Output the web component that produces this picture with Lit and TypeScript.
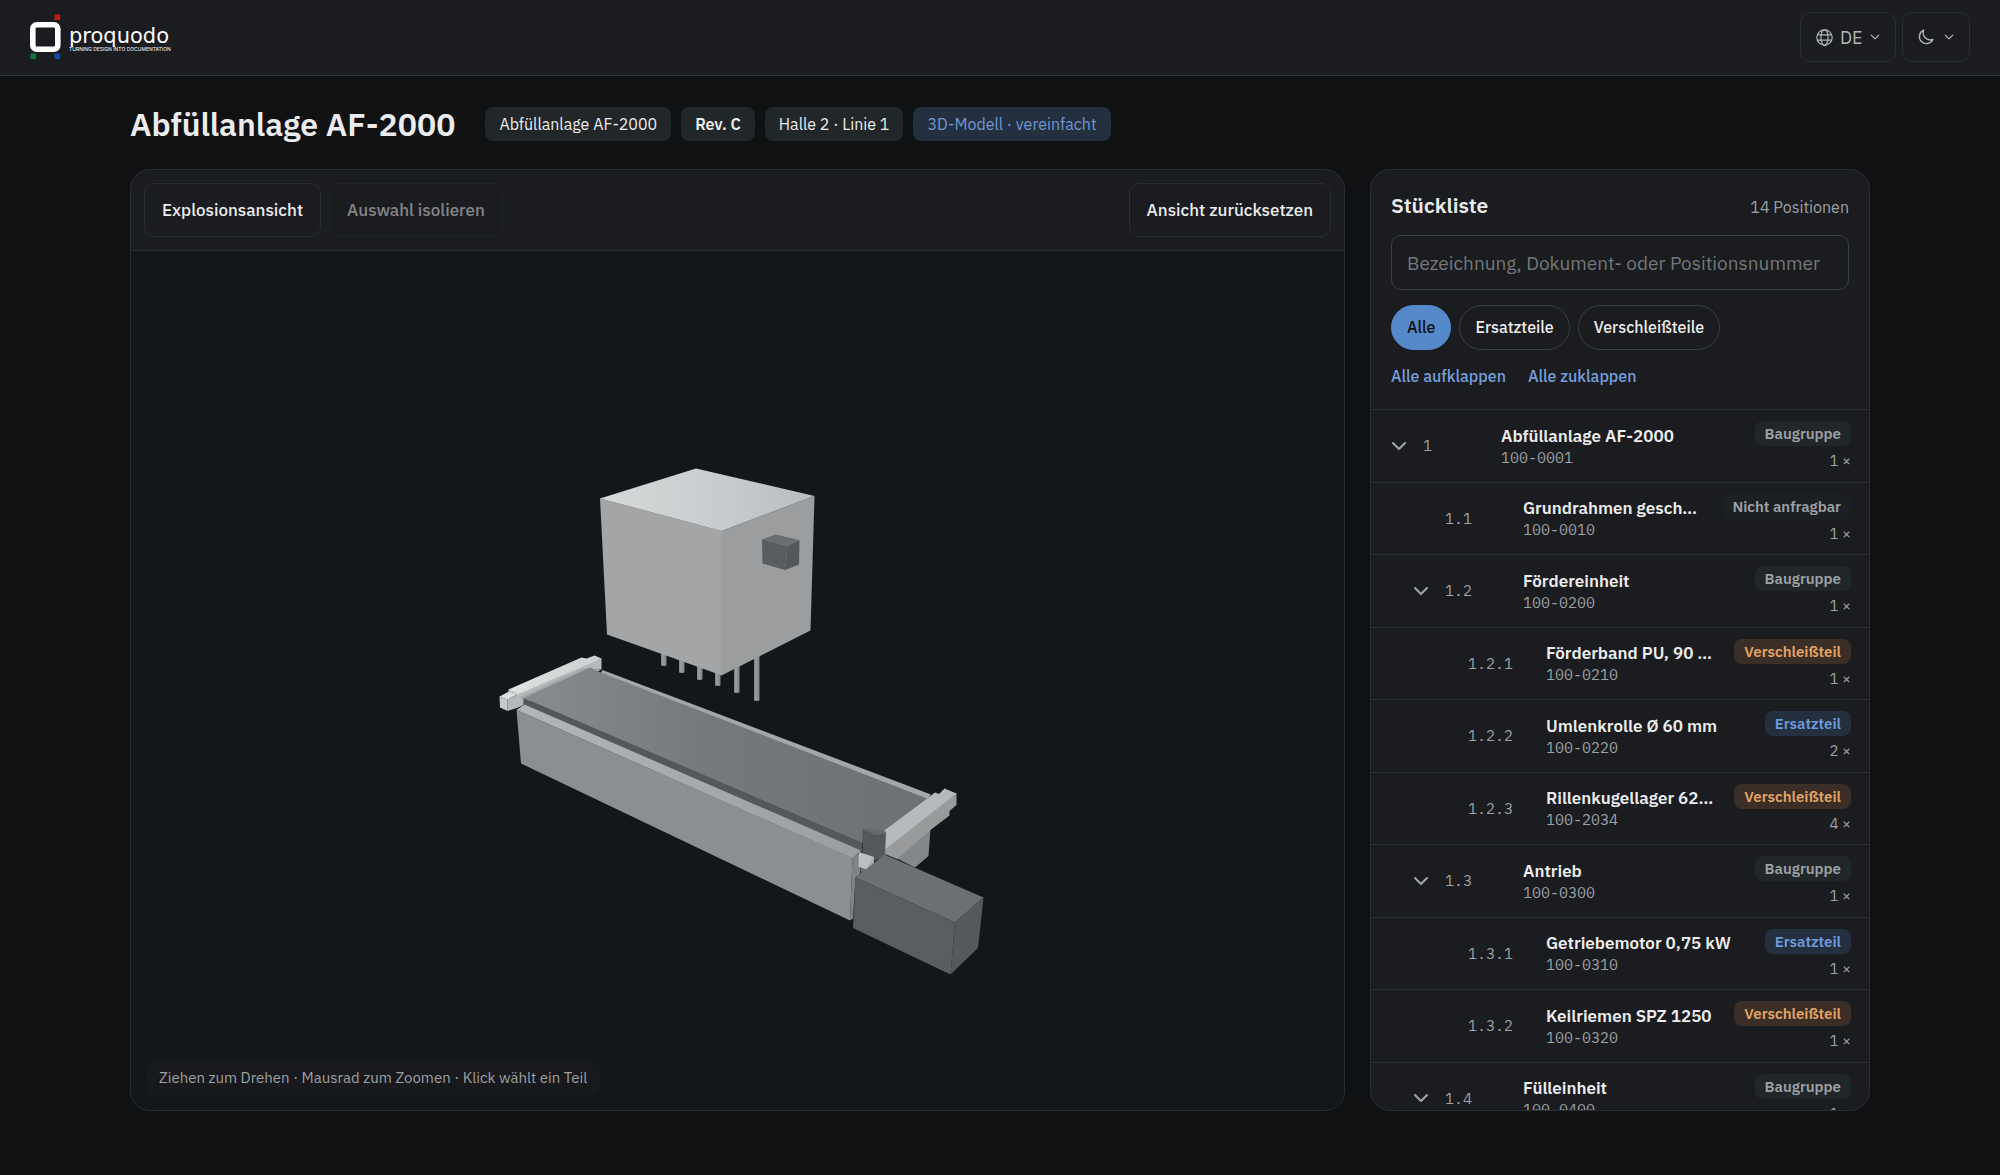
import { LitElement, html, svg, css } from "lit";
import { customElement, state } from "lit/decorators.js";
import { classMap } from "lit/directives/class-map.js";

type Kind = "assembly" | "locked" | "wear" | "spare";
type Filter = "all" | "spare" | "wear";

interface Part {
  pos: string;
  name: string;
  doc: string;
  kind: Kind;
  qty: number;
}

const KIND_LABEL: Record<Kind, string> = {
  assembly: "Baugruppe",
  locked: "Nicht anfragbar",
  wear: "Verschleißteil",
  spare: "Ersatzteil",
};

const FILTERS: { id: Filter; label: string }[] = [
  { id: "all", label: "Alle" },
  { id: "spare", label: "Ersatzteile" },
  { id: "wear", label: "Verschleißteile" },
];

const TOTAL_POSITIONS = 14;

const PARTS: Part[] = [
  { pos: "1", name: "Abfüllanlage AF-2000", doc: "100-0001", kind: "assembly", qty: 1 },
  { pos: "1.1", name: "Grundrahmen geschweißt", doc: "100-0010", kind: "locked", qty: 1 },
  { pos: "1.2", name: "Fördereinheit", doc: "100-0200", kind: "assembly", qty: 1 },
  { pos: "1.2.1", name: "Förderband PU, 90 × 1200", doc: "100-0210", kind: "wear", qty: 1 },
  { pos: "1.2.2", name: "Umlenkrolle Ø 60 mm", doc: "100-0220", kind: "spare", qty: 2 },
  { pos: "1.2.3", name: "Rillenkugellager 6203-2RS", doc: "100-2034", kind: "wear", qty: 4 },
  { pos: "1.3", name: "Antrieb", doc: "100-0300", kind: "assembly", qty: 1 },
  { pos: "1.3.1", name: "Getriebemotor 0,75 kW", doc: "100-0310", kind: "spare", qty: 1 },
  { pos: "1.3.2", name: "Keilriemen SPZ 1250", doc: "100-0320", kind: "wear", qty: 1 },
  { pos: "1.4", name: "Fülleinheit", doc: "100-0400", kind: "assembly", qty: 1 },
];

const chevron = (size: number, width: number) => html`
  <svg class="chevron" width=${size} height=${size} viewBox="0 0 12 12" fill="none" stroke="currentColor"
    stroke-width=${width} stroke-linecap="round" stroke-linejoin="round" aria-hidden="true">
    <path d="M1.5 3.8 6 8.3l4.500-4.500" />
  </svg>`;

/* Perspective view of the filling machine. */
@customElement("machine-view")
export class MachineView extends LitElement {
  static styles = css`
    :host { display: block; width: 100%; height: 100%; }
    .scene { display: block; width: 100%; height: 100%; }
  `;

  private pins = [
    [661, 666], [679, 673], [697, 680], [715, 686], [734, 693], [754, 701],
  ];

  render() {
    return html`
      <svg class="scene" viewBox="131 251 1213 859" role="img" aria-label="3D-Modell der Abfüllanlage">
        <defs>
          <linearGradient id="lid" x1="0" y1="0" x2="1" y2="0">
            <stop offset="0" stop-color="#d6d8d9" />
            <stop offset="0.6" stop-color="#c8cbcd" />
            <stop offset="1" stop-color="#b9bcbe" />
          </linearGradient>
          <linearGradient id="belt" x1="0" y1="0" x2="1" y2="0">
            <stop offset="0" stop-color="#888c8e" />
            <stop offset="0.45" stop-color="#75797b" />
            <stop offset="1" stop-color="#6d7173" />
          </linearGradient>
          <linearGradient id="beam" x1="0" y1="0" x2="1" y2="0">
            <stop offset="0" stop-color="#b2b6b8" />
            <stop offset="1" stop-color="#999ea0" />
          </linearGradient>
          <linearGradient id="roller" x1="0" y1="0" x2="1" y2="0">
            <stop offset="0" stop-color="#e0e2e3" />
            <stop offset="1" stop-color="#cccfd0" />
          </linearGradient>
        </defs>

        <!-- far frame -->
        <polygon fill="#82878a" points="930.5,828 928.5,856 915,867.500 890,855 900,845" />
        <polygon fill="#a3a7a9" points="600.5,673.500 602.5,670 931,794.500 927,799" />

        <!-- left roller with its bearing blocks -->
        <polygon fill="#b6b9ba" points="507.500,699.500 523.500,692 523.500,705 517,708 507.500,711" />
        <polygon fill="#c6c8ca" points="499.500,696.500 507.500,699.500 507.500,711 500,707.500" />
        <polygon fill="#dddfe0" points="499.500,696.500 509,691.500 517.500,694.500 507.500,699.500" />
        <polygon fill="#b7babb" points="517,694 590,661 594,661 601.500,658.500 601.500,669.500 590,669 524,699 517,702" />
        <polygon fill="#a7aaac" points="520,697 583,668 590,667.500 601,670 524,704" />
        <polygon fill="url(#roller)" points="508.500,689.500 581.500,657.500 586.500,658.500 594.500,655.500 601.500,658.500 590,663.500 517,694.500" />
        <polygon fill="#c3c5c7" points="508.500,689.500 517,693 517,695.500 508.500,692" />

        <!-- belt -->
        <polygon fill="#55585a" points="523.500,698 862,843 862,852 523.500,704.500" />
        <polygon fill="url(#belt)" points="523.500,698 590,667.500 602,673 927,798.500 884,832 862,843" />

        <!-- near frame -->
        <polygon fill="url(#beam)" points="516.500,710 524.500,704.500 861,850.500 852.500,858.500" />
        <polygon fill="#8b8f91" points="516.500,710 852.500,858 850,920.500 521,763.500" />
        <polygon fill="#7f8486" points="852.500,858 861,851.500 860,874 855.500,877.500 853,918.500 850,920.500" />

        <!-- right roller with its bearing blocks -->
        <polygon fill="#989a9c" points="885,848.500 956.500,793 956.500,805 949.500,811 949.500,815.500 930.500,830 897,859 885,854" />
        <polygon fill="#b7babc" points="883,831.500 935,792.500 939,794 944.500,788.500 956.500,793.500 885,849.500" />
        <polygon fill="#54585a" points="862.500,829 878.500,836 886,832 885,856 872,862 862.500,853" />
        <polygon fill="#66696b" points="862.500,829 865,828 884,830.500 886,832 878.500,836" />
        <polygon fill="#6b6f72" points="860,866 868,868 861,874" />
        <polygon fill="#bdc0c1" points="859,852 874,857 874,863.500 866.500,869.500 858.500,866.500" />
        <polygon fill="#a9acad" points="872,858.500 874,857 874,863.500 866.500,869.500" />

        <!-- drive motor -->
        <polygon fill="#6d7072" points="855.500,877.500 884.500,854.500 983.500,897.500 955,922.500" />
        <polygon fill="#5b5e61" points="855.500,877.500 955,922.500 950.500,974.500 853,928" />
        <polygon fill="#56595b" points="955,922.500 983.500,897.500 978,948 950.500,974.500" />

        <!-- filling head -->
        ${this.pins.map(([x, y]) => svg`
          <rect x=${x} y="620" width="5.500" height=${y - 620} rx="1.500" fill="#858889" />
          <rect x=${x + 1} y="620" width="2.500" height=${y - 621} fill="#979a9b" />`)}
        <polygon fill="#a3a5a6" points="600,498.500 722,531 722,675.500 607,634.500" />
        <polygon fill="#9b9d9e" points="721.500,531 814.500,496 810.500,630.500 721.500,675.500" />
        <polygon fill="url(#lid)" points="600,498.500 696,468.500 814.500,496 721.500,531" />
        <polygon fill="#595d60" points="762,539.500 787.500,546 785,570 762.500,563.500" />
        <polygon fill="#54585a" points="787.500,546 799.500,540 799,564.500 785,570" />
        <polygon fill="#6a6e70" points="762,539.500 775.500,534.500 799.500,540 787.500,546" />
      </svg>`;
  }
}

@customElement("app-root")
export class AppRoot extends LitElement {
  @state() private filter: Filter = "all";
  @state() private query = "";
  @state() private closed: string[] = [];

  static styles = css`
    :host {
      --bg: #0f1112;
      --surface: #1a1c1f;
      --canvas: #12171a;
      --line: #2a2e31;
      --line-strong: #3b3f42;
      --text: #ececee;
      --muted: #9ea1a4;
      --blue: #769fdc;
      --blue-soft: #242f3f;
      --chip: #212629;
      display: flex;
      flex-direction: column;
      height: 100vh;
      overflow: hidden;
      background: var(--bg);
      color: var(--text);
      font-family: "IBM Plex Sans", Roboto, "Open Sans", sans-serif;
      font-size: 16px;
    }
    * { box-sizing: border-box; }
    h1, h2, p, ul { margin: 0; padding: 0; }
    button, select, input { font: inherit; color: inherit; margin: 0; }
    button, select { cursor: pointer; }

    .topbar {
      display: flex;
      align-items: center;
      justify-content: space-between;
      padding: 12px 30px 13px;
      background: var(--surface);
      border-bottom: 1px solid #303437;
    }
    .brand { display: flex; align-items: center; gap: 8px; color: #fff; text-decoration: none; }
    .brand-text { display: flex; flex-direction: column; padding-top: 5px; }
    .brand-name { font: 21px/20px "DejaVu Sans", sans-serif; }
    .brand-claim { font: 5px/7px Inter, sans-serif; white-space: nowrap; }
    .tools { display: flex; gap: 6px; }
    .tool {
      display: flex;
      align-items: center;
      gap: 7px;
      height: 50px;
      padding: 0 15px;
      border: 1px solid var(--line);
      border-radius: 10px;
      background: none;
      color: #b4b7ba;
      font-size: 18px;
    }
    .tool-theme { gap: 10px; }
    .lang { appearance: none; width: 23px; padding: 0; border: 0; background: none; outline: none; }
    .lang option { color: #111; }

    .page {
      flex: 1;
      min-height: 0;
      width: 100%;
      max-width: 1800px;
      margin: 0 auto;
      padding: 27px 30px 64px;
      display: flex;
      flex-direction: column;
      gap: 24px;
    }
    .heading { display: flex; align-items: center; gap: 30px; }
    .title { font-size: 32px; line-height: 42px; font-weight: 600; }
    .chips { display: flex; gap: 10px; }
    .chip {
      padding: 0 14px;
      border-radius: 8px;
      background: var(--chip);
      font-size: 16px;
      line-height: 34px;
    }
    .chip-strong { font-weight: 600; }
    .chip-info { background: var(--blue-soft); color: #6f96d2; }

    .columns {
      flex: 1;
      min-height: 0;
      display: grid;
      grid-template-columns: minmax(0, 1fr) 500px;
      gap: 25px;
    }
    .panel {
      display: flex;
      flex-direction: column;
      min-height: 0;
      overflow: hidden;
      border: 1px solid var(--line);
      border-radius: 20px;
      background: var(--surface);
    }
    .toolbar {
      display: flex;
      gap: 8px;
      padding: 13px;
      border-bottom: 1px solid var(--line);
    }
    .action {
      height: 54px;
      padding: 0 17px;
      border: 1px solid var(--line);
      border-radius: 10px;
      background: none;
      color: var(--text);
      font-size: 17px;
      font-weight: 500;
    }
    .action:disabled { opacity: 0.5; cursor: default; }
    .action-end { margin-left: auto; }
    .canvas { position: relative; flex: 1; min-height: 0; background: var(--canvas); }
    .hint {
      position: absolute;
      left: 15px;
      bottom: 15px;
      padding: 0 13px;
      border-radius: 8px;
      background: #17191c;
      color: var(--muted);
      font-size: 15px;
      line-height: 34px;
    }

    .list-head {
      display: flex;
      flex-direction: column;
      gap: 15px;
      padding: 20px 20px 22px;
      border-bottom: 1px solid var(--line);
    }
    .list-title { display: flex; align-items: baseline; justify-content: space-between; }
    .subtitle { font-size: 21px; line-height: 30px; font-weight: 600; }
    .count { color: var(--muted); font-size: 16px; }
    .search {
      width: 100%;
      height: 55px;
      padding: 0 15px;
      border: 1px solid var(--line-strong);
      border-radius: 10px;
      background: none;
      font-size: 19px;
      outline: none;
    }
    .search::placeholder { color: #74777a; opacity: 1; }
    .filters { display: flex; gap: 8px; }
    .pill {
      height: 45px;
      padding: 0 15px 2px;
      border: 1px solid var(--line-strong);
      border-radius: 23px;
      background: none;
      font-size: 16px;
      font-weight: 500;
    }
    .pill-on { border-color: #5689ca; background: #5689ca; color: #0f1112; }
    .links { display: flex; gap: 22px; }
    .link {
      padding: 0;
      border: 0;
      background: none;
      color: var(--blue);
      font-size: 16px;
      line-height: 22px;
      font-weight: 500;
    }

    .rows { flex: 1; min-height: 0; overflow: auto; scrollbar-width: none; list-style: none; }
    .row {
      display: flex;
      align-items: center;
      padding: 11px 18px 11px 15px;
      border-bottom: 1px solid var(--line);
    }
    .level-1 { padding-left: 37px; }
    .level-2 { padding-left: 60px; }
    .toggle {
      display: grid;
      place-items: center;
      width: 26px;
      height: 26px;
      margin-right: 11px;
      padding: 0;
      border: 0;
      background: none;
      color: var(--muted);
    }
    .toggle-closed .chevron { rotate: -90deg; }
    .pos, .doc {
      color: var(--muted);
      font-family: "IBM Plex Mono", "Liberation Mono", monospace;
      font-size: 15px;
    }
    .pos { width: 78px; flex: none; }
    .info { flex: 1; min-width: 0; margin-right: 15px; }
    .name {
      overflow: hidden;
      text-overflow: ellipsis;
      white-space: nowrap;
      font-size: 17px;
      line-height: 24px;
      font-weight: 600;
    }
    .doc { line-height: 20px; }
    .side {
      display: flex;
      flex-direction: column;
      align-items: flex-end;
      gap: 5px;
      color: var(--muted);
      font-size: 15px;
      line-height: 1.3;
    }
    .tag { padding: 0 10px; border-radius: 8px; font-weight: 600; line-height: 25px; }
    .tag-assembly { background: var(--chip); }
    .tag-locked { background: #1d2023; }
    .tag-spare { background: var(--blue-soft); color: #6f9ada; }
    .tag-wear { background: #3a2e26; color: #e2a565; }
  `;

  private toggle(pos: string) {
    this.closed = this.closed.includes(pos)
      ? this.closed.filter((p) => p !== pos)
      : [...this.closed, pos];
  }

  private get visibleParts(): Part[] {
    const q = this.query.toLowerCase();
    return PARTS.filter(
      (p) =>
        !this.closed.some((c) => p.pos.startsWith(c + ".")) &&
        (this.filter === "all" || p.kind === this.filter) &&
        (!q || `${p.name} ${p.doc} ${p.pos}`.toLowerCase().includes(q)),
    );
  }

  private renderRow(p: Part) {
    const level = p.pos.split(".").length - 1;
    const open = !this.closed.includes(p.pos);
    return html`
      <li class=${classMap({ row: true, [`level-${level}`]: true })}>
        ${p.kind === "assembly"
          ? html`<button class=${classMap({ toggle: true, "toggle-closed": !open })} aria-expanded=${open}
              aria-label=${p.name} @click=${() => this.toggle(p.pos)}>${chevron(16, 1.6)}</button>`
          : html`<span class="toggle"></span>`}
        <span class="pos">${p.pos}</span>
        <div class="info">
          <p class="name">${p.name}</p>
          <p class="doc">${p.doc}</p>
        </div>
        <div class="side">
          <span class="tag tag-${p.kind}">${KIND_LABEL[p.kind]}</span>
          <span>${p.qty} ×</span>
        </div>
      </li>`;
  }

  render() {
    return html`
      <header class="topbar">
        <a class="brand" href="#">
          <svg width="31" height="46" viewBox="0 0 31 46" aria-hidden="true">
            <rect x="2.800" y="10.800" width="25" height="24.500" rx="4" fill="none" stroke="#fff" stroke-width="5.600" />
            <rect x="24.500" y="0.500" width="5.600" height="5.600" fill="#c8171b" />
            <rect x="0.500" y="39.500" width="5.600" height="5.600" fill="#0c7a42" />
            <rect x="24.500" y="39.500" width="5.600" height="5.600" fill="#0b4ca6" />
          </svg>
          <span class="brand-text">
            <span class="brand-name">proquodo</span>
            <span class="brand-claim">TURNING DESIGN INTO DOCUMENTATION</span>
          </span>
        </a>
        <div class="tools">
          <label class="tool">
            <svg width="17" height="17" viewBox="0 0 17 17" fill="none" stroke="currentColor" stroke-width="1.200" aria-hidden="true">
              <circle cx="8.500" cy="8.500" r="7.700" />
              <ellipse cx="8.500" cy="8.500" rx="3.600" ry="7.700" />
              <path d="M1.400 5.800h14.200M1.400 11.200h14.200" />
            </svg>
            <select class="lang" aria-label="Sprache">
              <option>DE</option>
              <option>EN</option>
            </select>
            ${chevron(10, 1.4)}
          </label>
          <button class="tool tool-theme" aria-haspopup="menu" aria-label="Farbschema">
            <svg width="16" height="16" viewBox="0 0 16 16" fill="none" stroke="currentColor" stroke-width="1.400" stroke-linejoin="round" aria-hidden="true">
              <path d="M5.600 1.200a7 7 0 1 0 9.200 9.300 7.200 7.200 0 0 1-9.200-9.300z" />
            </svg>
            ${chevron(10, 1.4)}
          </button>
        </div>
      </header>

      <main class="page">
        <div class="heading">
          <h1 class="title">Abfüllanlage AF-2000</h1>
          <div class="chips">
            <span class="chip">Abfüllanlage AF-2000</span>
            <span class="chip chip-strong">Rev. C</span>
            <span class="chip">Halle 2 · Linie 1</span>
            <span class="chip chip-info">3D-Modell · vereinfacht</span>
          </div>
        </div>

        <div class="columns">
          <section class="panel">
            <div class="toolbar">
              <button class="action">Explosionsansicht</button>
              <button class="action" disabled>Auswahl isolieren</button>
              <button class="action action-end">Ansicht zurücksetzen</button>
            </div>
            <div class="canvas">
              <machine-view></machine-view>
              <p class="hint">Ziehen zum Drehen · Mausrad zum Zoomen · Klick wählt ein Teil</p>
            </div>
          </section>

          <section class="panel">
            <div class="list-head">
              <div class="list-title">
                <h2 class="subtitle">Stückliste</h2>
                <span class="count">${TOTAL_POSITIONS} Positionen</span>
              </div>
              <input class="search" type="text" aria-label="Stückliste durchsuchen"
                placeholder="Bezeichnung, Dokument- oder Positionsnummer"
                @input=${(e: Event) => (this.query = (e.target as HTMLInputElement).value)} />
              <div class="filters">
                ${FILTERS.map((f) => html`
                  <button class=${classMap({ pill: true, "pill-on": this.filter === f.id })}
                    aria-pressed=${this.filter === f.id}
                    @click=${() => (this.filter = f.id)}>${f.label}</button>`)}
              </div>
              <div class="links">
                <button class="link" @click=${() => (this.closed = [])}>Alle aufklappen</button>
                <button class="link" @click=${() => (this.closed = ["1"])}>Alle zuklappen</button>
              </div>
            </div>
            <ul class="rows">
              ${this.visibleParts.map((p) => this.renderRow(p))}
            </ul>
          </section>
        </div>
      </main>`;
  }
}
